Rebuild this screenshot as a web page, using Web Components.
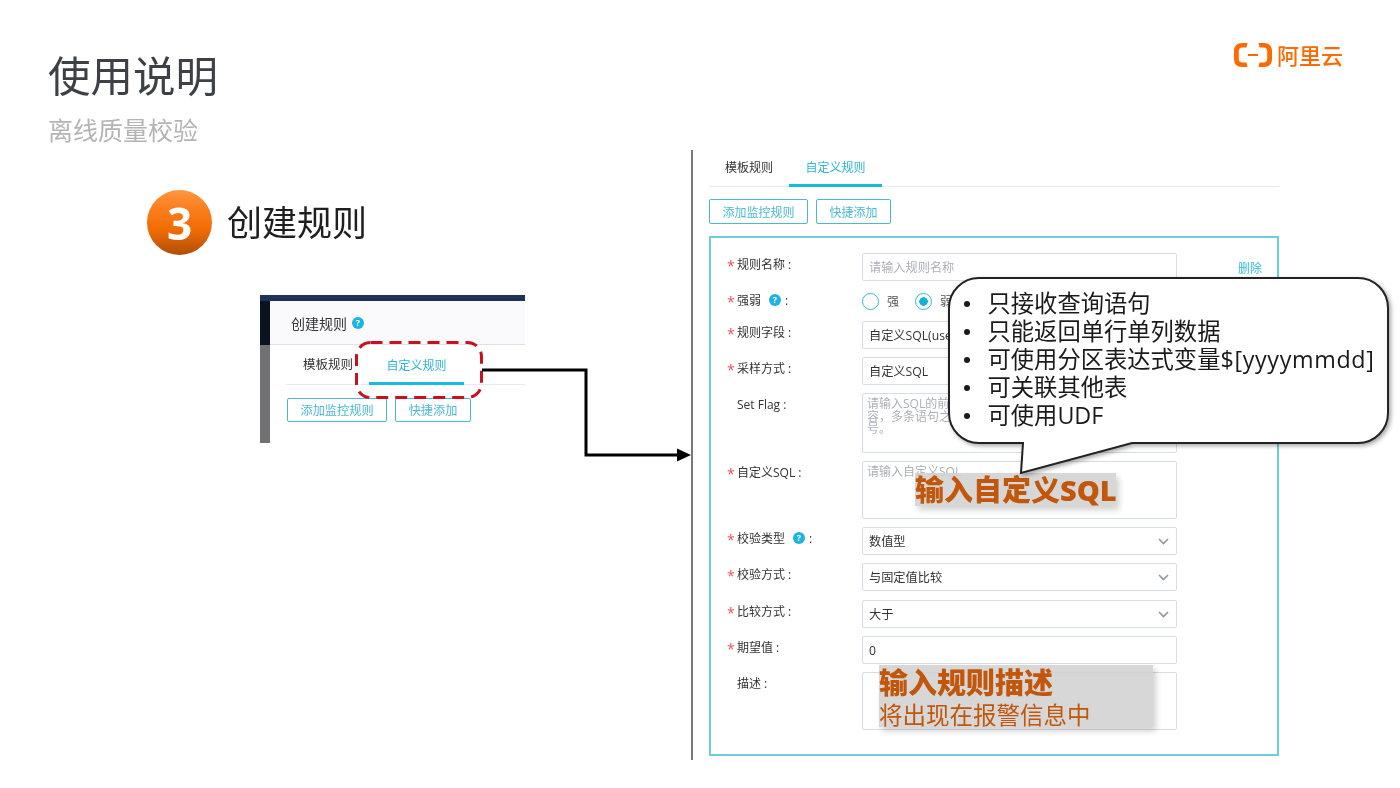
<!DOCTYPE html>
<html lang="zh">
<head>
<meta charset="utf-8">
<title>使用说明</title>
<style>
    html, body { margin: 0; background: #fff; }
    body { font-family: "Open Sans", "Noto Sans CJK SC", sans-serif; }
</style>
</head>
<body>
<slide-page>
    <slide-title slot="title" heading="使用说明" sub="离线质量校验"></slide-title>
    <brand-logo slot="logo"></brand-logo>

    <step-head slot="left" num="3" text="创建规则"></step-head>
    <mini-panel slot="left"></mini-panel>

    <rule-panel slot="right">
        <form-row label="规则名称" required>
            <text-field placeholder="请输入规则名称"></text-field>
            <a-link slot="action">删除</a-link>
        </form-row>
        <form-row label="强弱" required hint>
            <radio-pair></radio-pair>
        </form-row>
        <form-row label="规则字段" required><select-field value="自定义SQL(use"></select-field></form-row>
        <form-row label="采样方式" required><select-field value="自定义SQL"></select-field></form-row>
        <form-row label="Set Flag">
            <area-field rows="60">请输入SQL的前<br>容，多条语句之<br>号。</area-field>
        </form-row>
        <form-row label="自定义SQL" required>
            <area-field rows="58">请输入自定义SQL</area-field>
        </form-row>
        <form-row label="校验类型" required hint><select-field value="数值型"></select-field></form-row>
        <form-row label="校验方式" required><select-field value="与固定值比较"></select-field></form-row>
        <form-row label="比较方式" required style="margin-top:1px"><select-field value="大于"></select-field></form-row>
        <form-row label="期望值" required><text-field value="0"></text-field></form-row>
        <form-row label="描述"><area-field rows="58"></area-field></form-row>
    </rule-panel>

    <flow-arrow slot="over"></flow-arrow>
    <note-highlight slot="over" style="left:915px;top:473px;width:201px;height:33px">
        <b>输入自定义SQL</b>
    </note-highlight>
    <note-highlight slot="over" style="left:879px;top:665px;width:274px;height:62px;padding-top:1px;box-sizing:border-box">
        <b>输入规则描述</b>
        <span style="margin-top:1px">将出现在报警信息中</span>
    </note-highlight>
    <speech-bubble slot="over">
        <li>只接收查询语句</li>
        <li>只能返回单行单列数据</li>
        <li>可使用分区表达式变量<span style="letter-spacing:.65px">$[yyyymmdd]</span></li>
        <li>可关联其他表</li>
        <li>可使用UDF</li>
    </speech-bubble>
</slide-page>

<script>
class SlidePage extends HTMLElement {
    constructor(){
        super();
        const shadowRoot = this.attachShadow({mode: 'open'});
        shadowRoot.innerHTML = `
            <style>
                :host{
                    display: block;
                    position: relative;
                    width: 1400px;
                    height: 788px;
                    overflow: hidden;
                    background: #fff;
                    filter: blur(.3px);
                }
                header{
                    display: flex;
                    justify-content: space-between;
                    align-items: flex-start;
                    height: 150px;
                    padding-left: 48px;
                    padding-right: 56px;
                }
                main{
                    display: flex;
                }
                .left{
                    width: 544px;
                    padding-left: 147px;
                    padding-top: 40px;
                    display: flex;
                    flex-direction: column;
                    align-items: flex-start;
                }
                .right{
                    height: 610px;
                    border-left: 2px solid #77797d;
                    padding-left: 16px;
                }
            </style>
            <header><slot name="title"></slot><slot name="logo"></slot></header>
            <main>
                <div class="left"><slot name="left"></slot></div>
                <div class="right"><slot name="right"></slot></div>
            </main>
            <slot name="over"></slot>
        `
    }
}
window.customElements.define('slide-page', SlidePage)

class SlideTitle extends HTMLElement {
    constructor(){
        super();
        const shadowRoot = this.attachShadow({mode: 'open'});
        shadowRoot.innerHTML = `
            <style>
                :host{ display: block; padding-top: 44px; }
                h1{
                    margin: 0;
                    font: 400 42.5px/60px "Noto Sans CJK SC", sans-serif;
                    color: #3d4145;
                }
                p{
                    margin: 7px 0 0 0;
                    font: 400 25px/36px "Noto Sans CJK SC", sans-serif;
                    color: #b4b4b4;
                }
            </style>
            <h1>${this.getAttribute('heading')}</h1>
            <p>${this.getAttribute('sub')}</p>
        `
    }
}
window.customElements.define('slide-title', SlideTitle)

class BrandLogo extends HTMLElement {
    constructor(){
        super();
        const shadowRoot = this.attachShadow({mode: 'open'});
        shadowRoot.innerHTML = `
            <style>
                :host{
                    display: flex;
                    align-items: flex-start;
                    gap: 5px;
                    margin-top: 43px;
                    height: 24px;
                }
                span{
                    font: 500 22px/22px "Noto Sans CJK SC", sans-serif;
                    color: #ff6a00;
                    width: 67px;
                    white-space: nowrap;
                }
                svg{ display: block; }
            </style>
            <svg width="38" height="24" viewBox="0 0 38 24">
                <path d="M13.500 0H8C3 0 0 3 0 8V16C0 21 3 24 8 24H13.500L12.500 19.500H8.500C6 19.500 4.800 18.300 4.800 16V8C4.800 5.700 6 4.500 8.500 4.500H12.500Z" fill="#ff6a00"/>
                <path d="M24.500 0H30C35 0 38 3 38 8V16C38 21 35 24 30 24H24.500L25.500 19.500H29.500C32 19.500 33.200 18.300 33.200 16V8C33.200 5.700 32 4.500 29.500 4.500H25.500Z" fill="#ff6a00"/>
                <rect x="14" y="11" width="10" height="2" fill="#ff6a00"/>
            </svg>
            <span>阿里云</span>
        `
    }
}
window.customElements.define('brand-logo', BrandLogo)

class StepHead extends HTMLElement {
    constructor(){
        super();
        const shadowRoot = this.attachShadow({mode: 'open'});
        shadowRoot.innerHTML = `
            <style>
                :host{
                    display: flex;
                    align-items: center;
                    gap: 15px;
                    height: 65px;
                }
                i{
                    display: flex;
                    justify-content: center;
                    align-items: center;
                    width: 65px;
                    height: 65px;
                    border-radius: 50%;
                    background: linear-gradient(#ff9642 0%, #fb7d1c 30%, #f06c05 62%, #b04e08 100%);
                    font: 700 44px/64px "Open Sans", sans-serif;
                    font-style: normal;
                    color: #fff;
                }
                span{
                    padding-bottom: 4px;
                    font: 400 35px/48px "Noto Sans CJK SC", sans-serif;
                    color: #1f1f1f;
                }
            </style>
            <i>${this.getAttribute('num')}</i>
            <span>${this.getAttribute('text')}</span>
        `
    }
}
window.customElements.define('step-head', StepHead)

class HelpDot extends HTMLElement {
    constructor(){
        super();
        const shadowRoot = this.attachShadow({mode: 'open'});
        shadowRoot.innerHTML = `
            <style>
                :host{
                    display: inline-flex;
                    justify-content: center;
                    align-items: center;
                    width: 12px;
                    height: 12px;
                    border-radius: 50%;
                    background: #1cb4e0;
                    color: #fff;
                    font: 700 9px/12px "Open Sans", sans-serif;
                }
            </style>
            ?
        `
    }
}
window.customElements.define('help-dot', HelpDot)

class RuleTabs extends HTMLElement {
    constructor(){
        super();
        const shadowRoot = this.attachShadow({mode: 'open'});
        shadowRoot.innerHTML = `
            <style>
                :host{
                    display: flex;
                    align-items: stretch;
                    height: var(--tabs-height, 36px);
                    border-bottom: 1px solid #e8e9ec;
                    font: 400 12px/1 "Noto Sans CJK SC", sans-serif;
                }
                div{
                    display: flex;
                    align-items: center;
                    justify-content: center;
                    box-sizing: border-box;
                    color: #333;
                    white-space: nowrap;
                    font-size: var(--first-size, 12px);
                    padding: var(--tab-nudge, 0) 16px 2px var(--first-left, 16px);
                }
                .on{
                    color: #2bb6d2;
                    font-size: 12px;
                    width: var(--on-width, 93px);
                    padding: var(--tab-nudge, 0) 0 0 0;
                    border-bottom: 3px solid #17bcd9;
                    margin-bottom: -1px;
                }
            </style>
            <div>模板规则</div>
            <div class="on">自定义规则</div>
        `
    }
}
window.customElements.define('rule-tabs', RuleTabs)

class RuleButton extends HTMLElement {
    constructor(){
        super();
        const shadowRoot = this.attachShadow({mode: 'open'});
        shadowRoot.innerHTML = `
            <style>
                :host{
                    display: inline-flex;
                    align-items: center;
                    height: 23px;
                    padding: 0 12.5px;
                    border: 1px solid #4db9d0;
                    border-radius: 2px;
                    font: 400 12px/1 "Noto Sans CJK SC", sans-serif;
                    color: #4db9d0;
                    white-space: nowrap;
                }
            </style>
            <slot></slot>
        `
    }
}
window.customElements.define('rule-button', RuleButton)

class MiniPanel extends HTMLElement {
    constructor(){
        super();
        const shadowRoot = this.attachShadow({mode: 'open'});
        shadowRoot.innerHTML = `
            <style>
                :host{
                    display: grid;
                    grid-template-columns: 10px 255px;
                    grid-template-rows: 6px 44px 98px;
                    margin-left: 113px;
                    margin-top: 40px;
                }
                .top{ grid-column: 1 / 3; background: #1f3358; }
                .side-a{ background: #0c1320; }
                .side-b{ background: #717174; }
                .head{
                    display: flex;
                    align-items: center;
                    gap: 5px;
                    padding-left: 21px;
                    background: #fafafc;
                    border-bottom: 1px solid #dfe0e6;
                    font: 400 14px/1 "Noto Sans CJK SC", sans-serif;
                    color: #333;
                }
                .body{
                    padding-left: 16px;
                    --tabs-height: 39px;
                    --first-size: 12.5px;
                    --on-width: 95px;
                    --tab-nudge: 2px;
                    --first-left: 17px;
                }
                .btns{ display: flex; gap: 8px; margin: 13px 0 0 1px; }
                rule-button{ height: 22px; padding: 0 12.5px; font-size: 12.2px; }
            </style>
            <div class="top"></div>
            <div class="side-a"></div>
            <div class="head">创建规则 <help-dot></help-dot></div>
            <div class="side-b"></div>
            <div class="body">
                <rule-tabs></rule-tabs>
                <div class="btns">
                    <rule-button>添加监控规则</rule-button>
                    <rule-button>快捷添加</rule-button>
                </div>
            </div>
        `
    }
}
window.customElements.define('mini-panel', MiniPanel)

class RulePanel extends HTMLElement {
    constructor(){
        super();
        const shadowRoot = this.attachShadow({mode: 'open'});
        shadowRoot.innerHTML = `
            <style>
                :host{ display: block; width: 570px; }
                .btns{ display: flex; gap: 8px; margin-top: 12px; }
                form{
                    display: flex;
                    flex-direction: column;
                    gap: 8px;
                    box-sizing: border-box;
                    height: 520px;
                    margin-top: 12px;
                    padding: 15px 0 0 16px;
                    border: 2px solid #6ccedd;
                }
            </style>
            <rule-tabs></rule-tabs>
            <div class="btns">
                <rule-button>添加监控规则</rule-button>
                <rule-button>快捷添加</rule-button>
            </div>
            <form><slot></slot></form>
        `
    }
}
window.customElements.define('rule-panel', RulePanel)

class FormRow extends HTMLElement {
    get label(){ return this.getAttribute('label') }

    constructor(){
        super();
        const shadowRoot = this.attachShadow({mode: 'open'});
        const star = this.hasAttribute('required') ? '<em>*</em>' : '';
        const hint = this.hasAttribute('hint') ? '<help-dot></help-dot><span class="colon">:</span>' : '';
        shadowRoot.innerHTML = `
            <style>
                :host{
                    display: grid;
                    grid-template-columns: 135px 315px 1fr;
                    font: 400 12px/1 "Open Sans", "Noto Sans CJK SC", sans-serif;
                    color: #333;
                }
                label{
                    position: relative;
                    display: flex;
                    align-items: flex-start;
                    gap: 8px;
                    padding-left: 10px;
                    padding-top: 5px;
                    line-height: 13px;
                    white-space: nowrap;
                }
                .colon{ margin-left: -4px; }
                em{
                    position: absolute;
                    left: 0;
                    top: 6px;
                    font: 400 14px/13px "Open Sans", sans-serif;
                    color: #e8505b;
                }
                .action{ padding-left: 61px; padding-top: 9px; }
            </style>
            <label>${star}<span>${this.label}${hint ? '' : ' :'}</span>${hint}</label>
            <div><slot></slot></div>
            <div class="action"><slot name="action"></slot></div>
        `
    }
}
window.customElements.define('form-row', FormRow)

class TextField extends HTMLElement {
    constructor(){
        super();
        const shadowRoot = this.attachShadow({mode: 'open'});
        const value = this.getAttribute('value');
        shadowRoot.innerHTML = `
            <style>
                :host{
                    display: flex;
                    align-items: center;
                    box-sizing: border-box;
                    height: 28px;
                    padding: 2px 6px 0;
                    border: 1px solid #d8dbe8;
                    border-radius: 2px;
                    background: #fff;
                    font: 400 12.2px/1 "Open Sans", "Noto Sans CJK SC", sans-serif;
                    color: ${value ? '#333' : '#adb0b8'};
                }
            </style>
            ${value || this.getAttribute('placeholder')}
        `
    }
}
window.customElements.define('text-field', TextField)

class SelectField extends HTMLElement {
    constructor(){
        super();
        const shadowRoot = this.attachShadow({mode: 'open'});
        shadowRoot.innerHTML = `
            <style>
                :host{
                    display: flex;
                    align-items: center;
                    justify-content: space-between;
                    box-sizing: border-box;
                    height: 28px;
                    padding: 0 7px 0 6px;
                    border: 1px solid #d8dbe8;
                    border-radius: 2px;
                    background: #fff;
                    font: 400 12.2px/1 "Open Sans", "Noto Sans CJK SC", sans-serif;
                    color: #333;
                }
                span{ padding-top: 2px; }
            </style>
            <span>${this.getAttribute('value')}</span>
            <svg width="11" height="7" viewBox="0 0 11 7"><path d="M1 1l4.500 4.500L10 1" fill="none" stroke="#8d97a5" stroke-width="1.600"/></svg>
        `
    }
}
window.customElements.define('select-field', SelectField)

class AreaField extends HTMLElement {
    constructor(){
        super();
        const shadowRoot = this.attachShadow({mode: 'open'});
        shadowRoot.innerHTML = `
            <style>
                :host{
                    display: block;
                    box-sizing: border-box;
                    height: ${this.getAttribute('rows')}px;
                    padding: 4px 4px;
                    border: 1px solid #d8dbe8;
                    border-radius: 2px;
                    background: #fff;
                    font: 400 12px/12.500px "Open Sans", "Noto Sans CJK SC", sans-serif;
                    color: #adb0b8;
                }
            </style>
            <slot></slot>
        `
    }
}
window.customElements.define('area-field', AreaField)

class RadioPair extends HTMLElement {
    constructor(){
        super();
        const shadowRoot = this.attachShadow({mode: 'open'});
        shadowRoot.innerHTML = `
            <style>
                :host{
                    display: flex;
                    align-items: center;
                    height: 24px;
                    font: 400 12px/1 "Noto Sans CJK SC", sans-serif;
                    color: #555;
                }
                i{
                    box-sizing: border-box;
                    display: block;
                    width: 17px;
                    height: 17px;
                    margin-right: 8px;
                    border: 1px solid #33b7d3;
                    border-radius: 50%;
                    background: #fff;
                }
                i.on{ margin-left: 16px; background: radial-gradient(circle, #14b2d6 0 4px, #fff 4.500px); }
            </style>
            <i></i><span>强</span>
            <i class="on"></i><span>弱</span>
        `
    }
}
window.customElements.define('radio-pair', RadioPair)

class ALink extends HTMLElement {
    constructor(){
        super();
        const shadowRoot = this.attachShadow({mode: 'open'});
        shadowRoot.innerHTML = `
            <style>
                :host{ display: inline-block; font: 400 12px/1 "Noto Sans CJK SC", sans-serif; color: #35bcd6; white-space: nowrap; }
            </style>
            <slot></slot>
        `
    }
}
window.customElements.define('a-link', ALink)

class FlowArrow extends HTMLElement {
    constructor(){
        super();
        const shadowRoot = this.attachShadow({mode: 'open'});
        shadowRoot.innerHTML = `
            <style>
                :host{ position: absolute; left: 350px; top: 335px; width: 345px; height: 130px; }
                svg{ display: block; }
            </style>
            <svg width="345" height="130" viewBox="350 335 345 130">
                <rect x="356.500" y="342.500" width="125" height="55" rx="14" fill="none" stroke="#c8101f" stroke-width="3" stroke-dasharray="12 7"/>
                <path d="M482 370H586V455H678" fill="none" stroke="#000" stroke-width="3"/>
                <path d="M677 448.500l14 6.500-14 6.500z" fill="#000"/>
            </svg>
        `
    }
}
window.customElements.define('flow-arrow', FlowArrow)

class NoteHighlight extends HTMLElement {
    constructor(){
        super();
        const shadowRoot = this.attachShadow({mode: 'open'});
        shadowRoot.innerHTML = `
            <style>
                :host{
                    position: absolute;
                    display: flex;
                    flex-direction: column;
                    background: rgba(208, 208, 208, .86);
                    box-shadow: 3px 4px 6px rgba(0, 0, 0, .18);
                    font: 400 23.500px/30px "Open Sans", "Noto Sans CJK SC", sans-serif;
                    color: #c2570c;
                    white-space: nowrap;
                }
                ::slotted(b){
                    font-size: 29px;
                    line-height: 33px;
                    font-weight: 900;
                }
            </style>
            <slot></slot>
        `
    }
}
window.customElements.define('note-highlight', NoteHighlight)

class SpeechBubble extends HTMLElement {
    constructor(){
        super();
        const shadowRoot = this.attachShadow({mode: 'open'});
        shadowRoot.innerHTML = `
            <style>
                :host{
                    position: absolute;
                    left: 948px;
                    top: 277px;
                    width: 444px;
                    height: 200px;
                }
                svg{ position: absolute; left: 0; top: 0; filter: drop-shadow(2px 2px 2px rgba(0, 0, 0, .35)); }
                ul{
                    position: relative;
                    margin: 0;
                    padding: 12px 0 0 39.500px;
                    list-style: none;
                    font: 400 23.300px/28px "Open Sans", "Noto Sans CJK SC", sans-serif;
                    color: #1a1a1a;
                    white-space: nowrap;
                }
                ::slotted(li){ list-style: none; position: relative; }
                ::slotted(li)::before{
                    content: "";
                    position: absolute;
                    left: -24px;
                    top: 12px;
                    width: 6px;
                    height: 6px;
                    border-radius: 50%;
                    background: #1a1a1a;
                }
            </style>
            <svg width="444" height="200" viewBox="0 0 444 200">
                <path d="M31 1H410a30 30 0 0 1 30 30V136a30 30 0 0 1-30 30H184L73 196 75 166H31a30 30 0 0 1-30-30V31A30 30 0 0 1 31 1z" fill="#fff" stroke="#222" stroke-width="2"/>
            </svg>
            <ul><slot></slot></ul>
        `
    }
}
window.customElements.define('speech-bubble', SpeechBubble)
</script>
</body>
</html>
